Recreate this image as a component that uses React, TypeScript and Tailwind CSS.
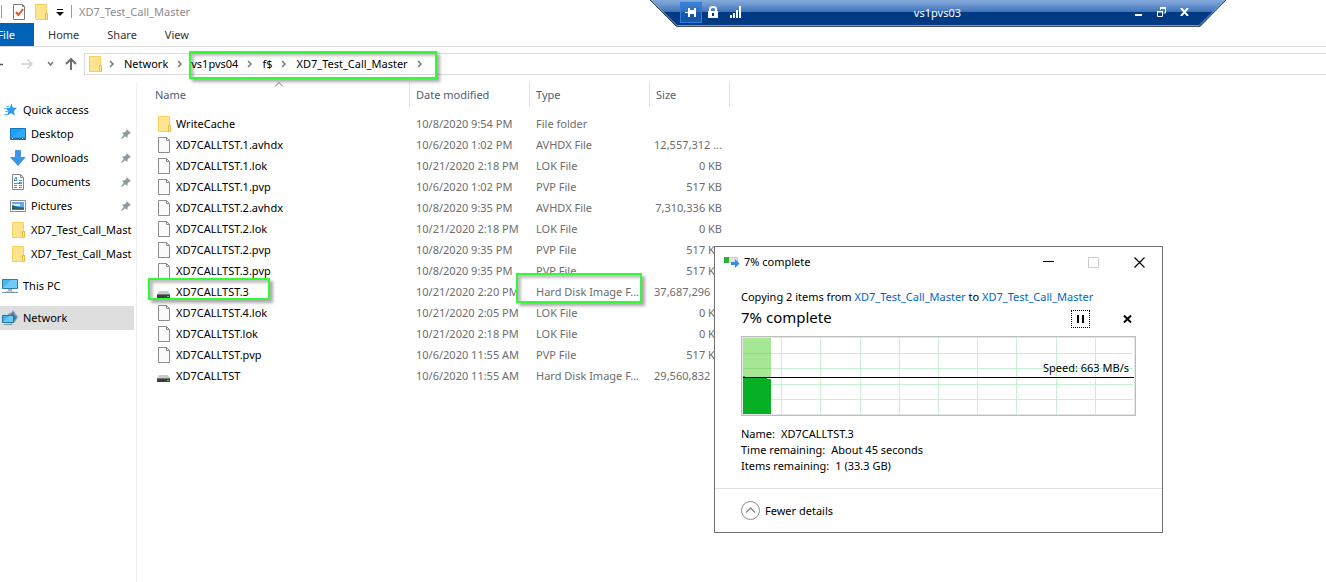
import type { ReactNode } from "react";

type Kind = "folder" | "file" | "disk";
type FileRow = { name: string; kind: Kind; date: string; type: string; size: string; marked?: boolean };

const files: FileRow[] = [
  { name: "WriteCache", kind: "folder", date: "10/8/2020 9:54 PM", type: "File folder", size: "" },
  { name: "XD7CALLTST.1.avhdx", kind: "file", date: "10/6/2020 1:02 PM", type: "AVHDX File", size: "12,557,312 ..." },
  { name: "XD7CALLTST.1.lok", kind: "file", date: "10/21/2020 2:18 PM", type: "LOK File", size: "0 KB" },
  { name: "XD7CALLTST.1.pvp", kind: "file", date: "10/6/2020 1:02 PM", type: "PVP File", size: "517 KB" },
  { name: "XD7CALLTST.2.avhdx", kind: "file", date: "10/8/2020 9:35 PM", type: "AVHDX File", size: "7,310,336 KB" },
  { name: "XD7CALLTST.2.lok", kind: "file", date: "10/21/2020 2:18 PM", type: "LOK File", size: "0 KB" },
  { name: "XD7CALLTST.2.pvp", kind: "file", date: "10/8/2020 9:35 PM", type: "PVP File", size: "517 KB" },
  { name: "XD7CALLTST.3.pvp", kind: "file", date: "10/8/2020 9:35 PM", type: "PVP File", size: "517 KB" },
  { name: "XD7CALLTST.3", kind: "disk", date: "10/21/2020 2:20 PM", type: "Hard Disk Image F...", size: "37,687,296 ...", marked: true },
  { name: "XD7CALLTST.4.lok", kind: "file", date: "10/21/2020 2:05 PM", type: "LOK File", size: "0 KB" },
  { name: "XD7CALLTST.lok", kind: "file", date: "10/21/2020 2:18 PM", type: "LOK File", size: "0 KB" },
  { name: "XD7CALLTST.pvp", kind: "file", date: "10/6/2020 11:55 AM", type: "PVP File", size: "517 KB" },
  { name: "XD7CALLTST", kind: "disk", date: "10/6/2020 11:55 AM", type: "Hard Disk Image F...", size: "29,560,832 ..." },
];

function FolderIcon() {
  return (
    <svg width="16" height="16" viewBox="0 0 16 16" className="shrink-0" aria-hidden="true">
      <path d="M2.500.5h11v15h-11z" fill="#ffe48f" stroke="#f7cf5a" />
      <path d="M12.500 9.500h2v6h-2z" fill="#ffe9a2" stroke="#e9bd45" />
    </svg>
  );
}

function PageIcon() {
  return (
    <svg width="16" height="16" viewBox="0 0 16 16" className="shrink-0" aria-hidden="true">
      <path d="M2.500.5h8l3 3v12h-11z" fill="#fbfbfb" stroke="#8c8c8c" />
      <path d="M10.500.5v3h3" fill="none" stroke="#8c8c8c" />
    </svg>
  );
}

function DiskIcon() {
  return (
    <svg width="16" height="16" viewBox="0 0 16 16" className="shrink-0" aria-hidden="true">
      <path d="M3 7h9l2 3H1z" fill="#c9cbcc" />
      <path d="M1 10h13v4H1z" fill="#3b3f41" />
      <path d="M1 10h13v1H1z" fill="#777b7d" />
      <path d="M11 12h2v1h-2z" fill="#4fe05a" />
    </svg>
  );
}

function FileIcon({ kind }: { kind: Kind }) {
  if (kind === "folder") return <FolderIcon />;
  if (kind === "disk") return <DiskIcon />;
  return <PageIcon />;
}

function StarIcon() {
  return (
    <svg width="17" height="16" viewBox="0 0 17 16" className="shrink-0" aria-hidden="true">
      <path d="M9.500 1.500l1.300 4 4.200.6-3.200 2.900 1 4.600L9 11.200 5 13.800l1.400-4.500L3.500 6.200l4.300-.4z" fill="#2f9bea" />
      <path d="M4 4.500h3M2 6.500h3M3 9.500h3M2 12.500h4" stroke="#58bdf2" />
    </svg>
  );
}

function DesktopIcon() {
  return (
    <svg width="16" height="16" viewBox="0 0 16 16" className="shrink-0" aria-hidden="true">
      <path d="M.5 2.500h15v11H.5z" fill="#1ba1f5" stroke="#1374c6" />
      <path d="M1 12h14v1H1z" fill="#1c6fae" />
      <path d="M2 12.500h1M12 12.500h1" stroke="#fff" />
      <path d="M3 11L12 3h3v8z" fill="#42b4fa" opacity=".5" />
    </svg>
  );
}

function DownloadIcon() {
  return (
    <svg width="16" height="16" viewBox="0 0 16 16" className="shrink-0" aria-hidden="true">
      <path d="M5.500.5h5v7H15L8 15.500.8 7.500h4.700z" fill="#3896ea" stroke="#2780d2" strokeWidth=".7" />
    </svg>
  );
}

function DocumentIcon() {
  return (
    <svg width="16" height="16" viewBox="0 0 16 16" className="shrink-0" aria-hidden="true">
      <path d="M2.500.5h8l3 3v12h-11z" fill="#fff" stroke="#858585" />
      <path d="M10.500.5v3h3" fill="none" stroke="#858585" />
      <path d="M4 6.500h3M9 6.500h3M9 8.500h3M4 9.500h8M4 11.500h3M9 11.500h3M4 13.500h3M9 13.500h3" stroke="#4d93c4" />
      <path d="M4 6l2-3 1 3" stroke="#2b9ad6" fill="none" />
    </svg>
  );
}

function PictureIcon() {
  return (
    <svg width="16" height="16" viewBox="0 0 16 16" className="shrink-0" aria-hidden="true">
      <path d="M.5 2.500h15v11H.5z" fill="#fff" stroke="#8e8e8e" />
      <path d="M2 4h12v8H2z" fill="#5eaaf0" />
      <path d="M2 6h8v2H2z" fill="#d9ecfb" />
      <path d="M2 7l3 1 3 1 6 .5V12H2z" fill="#2f5f63" />
      <path d="M2 11h12v1H2z" fill="#3c7ec0" />
    </svg>
  );
}

function MonitorIcon() {
  return (
    <svg width="17" height="16" viewBox="0 0 17 16" className="shrink-0" aria-hidden="true">
      <path d="M.5 1.500h15v9H.5z" fill="#44b8f5" stroke="#2c7dac" />
      <path d="M1 10l8-8h6v8z" fill="#8bd9fb" opacity=".6" />
      <path d="M6 11h4v2H6z" fill="#a8b3ba" />
      <path d="M0 14h16v1H0z" fill="#7892a2" />
      <path d="M4 13h8v1H4z" fill="#c5d3da" />
    </svg>
  );
}

function NetworkIcon() {
  return (
    <svg width="17" height="16" viewBox="0 0 17 16" className="shrink-0" aria-hidden="true">
      <path d="M6 4l4-2 1-2 2 3 3 4-3 5-4 2z" fill="#7f9fb6" />
      <path d="M9 4l3-2v3l3 2-3 4z" fill="#3f7ba2" />
      <path d="M.5 5.500h11v7H.5z" fill="#3fb1ef" stroke="#20719f" />
      <path d="M1 12l6-6h4v6z" fill="#7dd3f9" opacity=".7" />
      <path d="M2 14h8v1H2z" fill="#7892a2" />
    </svg>
  );
}

function PinIcon() {
  return (
    <svg width="12" height="12" viewBox="0 0 12 12" className="shrink-0" aria-hidden="true">
      <path d="M6.500 1L11 5 9.500 5.500 7.500 7.500V10L5.200 8.200 1.500 11 1 10.500 3.800 6.800 2 4.500h2.500l2-2z" fill="#8e9aa1" />
    </svg>
  );
}

function Chevron() {
  return (
    <svg width="6" height="8" viewBox="0 0 6 8" className="shrink-0" aria-hidden="true">
      <path d="M1 1l3 3-3 3" fill="none" stroke="#7a7a7a" strokeWidth="1.500" />
    </svg>
  );
}

function Highlight({ className }: { className: string }) {
  return (
    <span
      aria-hidden="true"
      className={`pointer-events-none absolute z-10 border-2 border-[#33fb33] shadow-[3px_3px_3px_#00000055,inset_3px_3px_3px_#00000040] ${className}`}
    />
  );
}

function TitleBar() {
  return (
    <header className="flex h-[23px] items-center">
      <span className="ml-px h-[13px] w-px bg-[#9b9b9b]" />
      <button aria-label="Properties" className="ml-[9px]">
        <svg width="16" height="16" viewBox="0 0 16 16">
          <path d="M2.500.5h9l2 2v13h-11z" fill="#fff" stroke="#7b7b7b" />
          <path d="M11.500.5v2h2" fill="none" stroke="#7b7b7b" />
          <path d="M5 8l2.500 3L12 5" fill="none" stroke="#e8501f" strokeWidth="2" />
        </svg>
      </button>
      <button aria-label="New folder" className="ml-[6px]"><FolderIcon /></button>
      <button aria-label="Customize Quick Access Toolbar" className="ml-[7px]">
        <svg width="8" height="8" viewBox="0 0 8 8">
          <path d="M1 1h6v1H1zM0 4h8L4 8z" fill="#111" />
        </svg>
      </button>
      <span className="ml-[7px] h-[13px] w-px bg-[#9b9b9b]" />
      <h1 className="ml-[7px] text-[#8c8c8c]">XD7_Test_Call_Master</h1>
    </header>
  );
}

function Ribbon() {
  return (
    <nav className="flex h-6 items-stretch border-b border-[#dcdcdc] text-[#333]">
      <button className="flex w-[34px] items-center justify-end bg-[#0063b8] pr-[19px] text-white">File</button>
      <div className="ml-[14px] flex gap-7">
        <button>Home</button>
        <button>Share</button>
        <button>View</button>
      </div>
    </nav>
  );
}

function AddressRow() {
  return (
    <div className="flex items-center pt-[6px]">
      <div className="flex w-[84px] items-center">
        <button aria-label="Back" className="w-[3px]">
          <svg width="3" height="10" viewBox="0 0 3 10"><path d="M0 5.500h3" stroke="#555" strokeWidth="1.500" /></svg>
        </button>
        <button aria-label="Forward" className="ml-[18px]">
          <svg width="12" height="12" viewBox="0 0 12 12">
            <path d="M0 6h11M6.500 1.500L11 6l-4.500 4.500" fill="none" stroke="#d0d0d0" strokeWidth="1.500" />
          </svg>
        </button>
        <button aria-label="Recent locations" className="ml-[14px]">
          <svg width="7" height="6" viewBox="0 0 7 6"><path d="M1 1l2.500 3L6 1" fill="none" stroke="#777" strokeWidth="1.500" /></svg>
        </button>
        <button aria-label="Up" className="ml-[11px]">
          <svg width="12" height="12" viewBox="0 0 12 12">
            <path d="M6 12V1.500M1 6l5-5 5 5" fill="none" stroke="#6e6e6e" strokeWidth="2" />
          </svg>
        </button>
      </div>
      <div className="flex h-[22px] flex-1 items-center border-y border-l border-[#dcdcdc] pl-[2px]">
        <FolderIcon />
        <div className="ml-[6px] flex items-center gap-[9px]">
          <Chevron />
          <a href="#network">Network</a>
          <Chevron />
        </div>
        <div className="relative ml-2 flex h-5 items-center gap-[9px]">
          <a href="#vs1pvs04">vs1pvs04</a>
          <Chevron />
          <a href="#f">f$</a>
          <Chevron />
          <a href="#master">XD7_Test_Call_Master</a>
          <Chevron />
          <Highlight className="-top-[3px] -right-[14px] -bottom-[5px] -left-[2px]" />
        </div>
      </div>
    </div>
  );
}

function NavItem({ icon, label, pinned, root, active }: { icon: ReactNode; label: string; pinned?: boolean; root?: boolean; active?: boolean }) {
  return (
    <a href="#nav" className={`flex h-6 w-[134px] items-center overflow-hidden whitespace-nowrap ${root ? "gap-1 pl-[2px]" : "gap-[5px] pl-[10px]"} ${active ? "bg-[#dedede]" : ""}`}>
      {icon}
      <span className="flex-1">{label}</span>
      {pinned && <span className="mr-[2px]"><PinIcon /></span>}
    </a>
  );
}

function Sidebar() {
  return (
    <nav aria-label="Navigation pane" className="w-[137px] shrink-0 border-r border-[#f0f0f0] pt-4">
      <NavItem icon={<StarIcon />} label="Quick access" root />
      <NavItem icon={<DesktopIcon />} label="Desktop" pinned />
      <NavItem icon={<DownloadIcon />} label="Downloads" pinned />
      <NavItem icon={<DocumentIcon />} label="Documents" pinned />
      <NavItem icon={<PictureIcon />} label="Pictures" pinned />
      <NavItem icon={<FolderIcon />} label="XD7_Test_Call_Mast" />
      <NavItem icon={<FolderIcon />} label="XD7_Test_Call_Mast" />
      <div className="pt-2"><NavItem icon={<MonitorIcon />} label="This PC" root /></div>
      <div className="pt-2"><NavItem icon={<NetworkIcon />} label="Network" root active /></div>
    </nav>
  );
}

function FileTable() {
  const head = "flex h-[25px] items-center border-r border-[#e3e3e3] pl-[6px]";
  return (
    <main className="flex-1 pb-6 pl-3">
      <table className="w-[581px] table-fixed border-collapse text-left whitespace-nowrap">
        <colgroup>
          <col className="w-[261px]" />
          <col className="w-[120px]" />
          <col className="w-[120px]" />
          <col className="w-[80px]" />
        </colgroup>
        <thead className="text-[#4c607a]">
          <tr className="h-[31px] align-top">
            <th className="p-0 font-normal">
              <div className={`relative ${head}`}>
                Name
                <svg width="9" height="5" viewBox="0 0 9 5" className="absolute top-0 left-1/2 -translate-x-1/2" aria-hidden="true">
                  <path d="M.5 4.500l4-4 4 4" fill="none" stroke="#777" />
                </svg>
              </div>
            </th>
            <th className="p-0 font-normal"><div className={head}>Date modified</div></th>
            <th className="p-0 font-normal"><div className={head}>Type</div></th>
            <th className="p-0 font-normal"><div className={head}>Size</div></th>
          </tr>
        </thead>
        <tbody className="text-[#6d6d6d]">
          {files.map((f) => (
            <tr key={f.name} className="h-[21px]">
              <td className="relative p-0 pl-[7px] text-black">
                <div className="flex items-center gap-1">
                  <FileIcon kind={f.kind} />
                  {f.name}
                </div>
                {f.marked && <Highlight className="-top-[3px] -left-px h-[22px] w-[122px]" />}
              </td>
              <td className="p-0 pl-[6px]">{f.date}</td>
              <td className="relative p-0 pl-[6px]">
                {f.type}
                {f.marked && <Highlight className="-top-[8px] -left-[14px] h-[30px] w-[126px]" />}
              </td>
              <td className="p-0 pr-2 text-right">{f.size}</td>
            </tr>
          ))}
        </tbody>
      </table>
    </main>
  );
}

function RemoteBar() {
  return (
    <div className="absolute top-0 left-[650px] h-[27px] w-[576px] text-white">
      <svg width="576" height="27" viewBox="0 0 576 27" className="absolute inset-0" aria-hidden="true">
        <defs>
          <linearGradient id="bar" x1="0" y1="0" x2="0" y2="1">
            <stop offset="0" stopColor="#84abdb" />
            <stop offset=".2" stopColor="#6b94d0" />
            <stop offset=".46" stopColor="#3a72b4" />
            <stop offset=".46" stopColor="#003a84" />
            <stop offset="1" stopColor="#003a84" />
          </linearGradient>
        </defs>
        <path d="M0 0h576l-26 26.500H26.500z" fill="url(#bar)" />
        <path d="M1 0l26 25.500h522L575 0" fill="none" stroke="#6d9bdb" />
        <path d="M0 0l26.500 26.500H550L576 0" fill="none" stroke="#4b4b52" />
      </svg>
      <div className="relative flex h-6 items-center pl-[30px]">
        <button aria-label="Pin connection bar" className="flex h-[21px] w-[22px] items-center justify-center border border-[#2f7fdb] bg-[#1f6cc4]/60">
          <svg width="12" height="9" viewBox="0 0 12 9"><path d="M0 4h3V0h2v2h4V0h2v9H9V6H5v3H3V5H0z" fill="#fff" /></svg>
        </button>
        <svg width="10" height="12" viewBox="0 0 10 12" className="ml-[6px]" aria-label="Secure">
          <path d="M0 5h10v7H0z" fill="#fff" />
          <path d="M2 5V3q0-2 3-2t3 2v2" fill="none" stroke="#fff" strokeWidth="2" />
          <path d="M4 7h2v3H4z" fill="#003a84" />
        </svg>
        <svg width="12" height="12" viewBox="0 0 12 12" className="ml-3" aria-label="Connection quality">
          <path d="M0 9h2v3H0zM3 7h2v5H3zM6 4h2v8H6zM9 0h2v12H9z" fill="#fff" />
        </svg>
        <span className="ml-auto pt-[2px] pr-[174px]">vs1pvs03</span>
        <button aria-label="Minimize session" className="pt-[7px]">
          <svg width="7" height="3" viewBox="0 0 7 3"><path d="M0 0h7v2H0z" fill="#fff" /></svg>
        </button>
        <button aria-label="Restore session" className="ml-[15px]">
          <svg width="9" height="10" viewBox="0 0 9 10">
            <path d="M3.500 3V1h5v5h-2M.5 4.500h5v5h-5z" fill="none" stroke="#fff" />
            <path d="M3 0h6v2H3zM0 4h6v1.500H0z" fill="#fff" />
          </svg>
        </button>
        <button aria-label="Close session" className="mr-[37px] ml-[14px]">
          <svg width="9" height="8" viewBox="0 0 9 8"><path d="M1 0l7 8M8 0L1 8" stroke="#fff" strokeWidth="2" /></svg>
        </button>
      </div>
    </div>
  );
}

const gridX = [38, 77, 117, 156, 195, 234, 273, 313, 352];
const gridY = [15, 30, 46, 61];

function CopyDialog() {
  return (
    <section role="dialog" aria-label="7% complete" className="absolute top-[246px] left-[714px] z-20 w-[449px] border border-[#707070] bg-white">
      <div className="flex h-[30px] items-center pl-[9px]">
        <svg width="16" height="12" viewBox="0 0 16 12" aria-hidden="true">
          <path d="M.5 1.500h13v5H.5z" fill="#e4e4e4" stroke="#c8c8c8" />
          <path d="M0 1h5v6H0z" fill="#2fb036" />
          <path d="M7 6h4V3l4.500 4.500L11 12V9H7z" fill="#2f8fe0" />
        </svg>
        <h2 className="ml-1">7% complete</h2>
        <button aria-label="Minimize" className="ml-auto">
          <svg width="11" height="11" viewBox="0 0 11 11"><path d="M0 4.500h11" stroke="#000" /></svg>
        </button>
        <button aria-label="Maximize" disabled className="ml-[34px]">
          <svg width="11" height="11" viewBox="0 0 11 11"><path d="M.5.5h10v10H.5z" fill="none" stroke="#ccc" /></svg>
        </button>
        <button aria-label="Close" className="mr-[17px] ml-[35px]">
          <svg width="11" height="11" viewBox="0 0 11 11"><path d="M.5.5l10 10M10.500.5l-10 10" stroke="#000" strokeWidth="1.200" /></svg>
        </button>
      </div>
      <div className="px-[26px] pt-3">
        <p className="leading-4">
          Copying 2 items from <a href="#source" className="text-[#0066cc]">XD7_Test_Call_Master</a> to{" "}
          <a href="#target" className="text-[#0066cc]">XD7_Test_Call_Master</a>
        </p>
        <div className="flex h-[26px] items-center pt-[2px]">
          <span className="pb-1 text-[15px]">7% complete</span>
          <button aria-label="Pause" className="ml-auto flex h-[18px] w-[19px] items-center justify-center border border-dotted border-black">
            <svg width="7" height="8" viewBox="0 0 7 8"><path d="M0 0h2v8H0zM5 0h2v8H5z" fill="#000" /></svg>
          </button>
          <button aria-label="Cancel" className="mr-1 ml-[33px]">
            <svg width="9" height="8" viewBox="0 0 9 8"><path d="M1 .5l7 7M8 .5l-7 7" stroke="#000" strokeWidth="2" /></svg>
          </button>
        </div>
        <div className="relative mt-[5px] h-20 w-[395px] border border-[#bcbcbc]">
          <svg width="393" height="78" viewBox="-1 -1 393 78" aria-label="Copy speed chart">
            <path d="M-.5-.5h392v77H-.5z" fill="#fff" stroke="#e6e6e6" />
            <path d="M0 0h28v40H0z" fill="#a6e795" />
            {gridX.map((x) => <path key={x} d={`M${x + 0.5} 0v76`} stroke="#c9efd3" />)}
            {gridY.map((y) => <path key={y} d={`M28 ${y + 0.5}h362`} stroke="#c9efd3" />)}
            <path d="M0 15.500h28M0 30.500h28" stroke="#8cdb7d" />
            <path d="M0 38h2v2h22v1h4v35H0z" fill="#06b025" />
            <path d="M0 39.500h391" stroke="#000" />
          </svg>
          <span className="absolute right-[6px] bottom-[39px] leading-4">Speed: 663 MB/s</span>
        </div>
        <dl className="mt-[10px] mb-[14px] leading-4">
          <div className="flex gap-[6px]"><dt>Name:</dt><dd>XD7CALLTST.3</dd></div>
          <div className="flex gap-[6px]"><dt>Time remaining:</dt><dd>About 45 seconds</dd></div>
          <div className="flex gap-[6px]"><dt>Items remaining:</dt><dd>1 (33.3 GB)</dd></div>
        </dl>
      </div>
      <div className="border-t border-[#dfdfdf] px-[26px] py-3">
        <button className="flex items-center gap-[5px]">
          <svg width="19" height="19" viewBox="0 0 19 19" aria-hidden="true">
            <circle cx="9.500" cy="9.500" r="9" fill="none" stroke="#8c8c8c" />
            <path d="M5 11.500l4.500-4.500 4.500 4.500" fill="none" stroke="#8c8c8c" strokeWidth="1.500" />
          </svg>
          Fewer details
        </button>
      </div>
    </section>
  );
}

export default function App() {
  return (
    <div className="relative flex min-h-screen flex-col overflow-hidden bg-white font-['Noto_Sans','Open_Sans',sans-serif] text-[11px] leading-4 text-black">
      <TitleBar />
      <Ribbon />
      <AddressRow />
      <div className="flex flex-1 pt-[7px]">
        <Sidebar />
        <FileTable />
      </div>
      <RemoteBar />
      <CopyDialog />
    </div>
  );
}
